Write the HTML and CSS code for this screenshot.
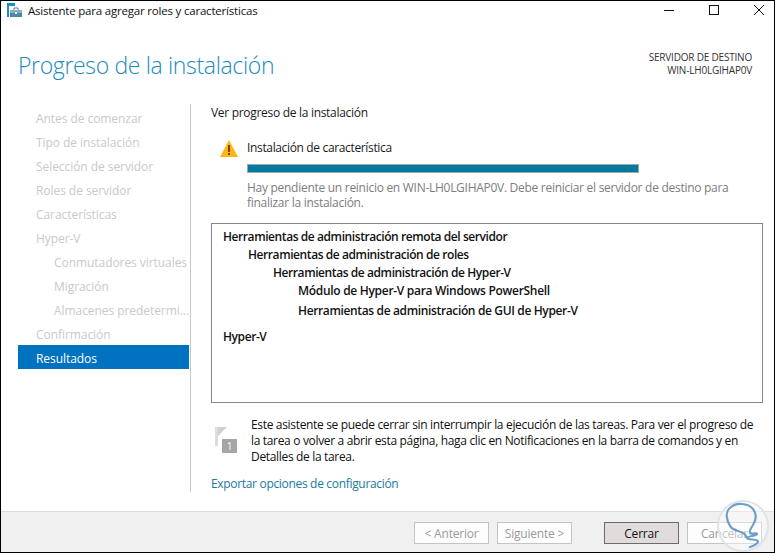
FILE: index.html
```html
<!DOCTYPE html>
<html lang="es">
<head>
<meta charset="utf-8">
<title>Asistente para agregar roles y características</title>
<link rel="stylesheet" href="styles.css">
</head>
<body>
<div class="window">
  <div class="titlebar">
    <svg class="app-icon" width="15" height="14" viewBox="0 0 15 14">
      <rect x="0" y="0" width="8" height="3" fill="#1a8fc4"/>
      <rect x="0" y="3" width="2" height="11" fill="#1a8fc4"/>
      <rect x="3" y="7" width="12" height="7" fill="#4f86ab"/>
      <path d="M3 7h12v3H3z" fill="#86afcb"/>
      <path d="M7 7V5h4v2" fill="none" stroke="#5a7f9a"/>
      <rect x="8" y="9" width="2" height="2" fill="#fff"/>
    </svg>
    <span class="title-text">Asistente para agregar roles y características</span>
    <div class="controls">
      <svg width="10" height="10" viewBox="0 0 10 10"><path d="M0 5.5h10" stroke="#111" fill="none"/></svg>
      <svg width="10" height="10" viewBox="0 0 10 10"><rect x=".5" y=".5" width="9" height="9" stroke="#111" fill="none"/></svg>
      <svg width="10" height="10" viewBox="0 0 10 10"><path d="M0 0l10 10M10 0L0 10" stroke="#111" fill="none"/></svg>
    </div>
  </div>
  <header class="head">
    <h1>Progreso de la instalación</h1>
    <div class="dest">SERVIDOR DE DESTINO<br>WIN-LH0LGIHAP0V</div>
  </header>
  <div class="content">
    <nav class="side">
      <div class="item">Antes de comenzar</div>
      <div class="item">Tipo de instalación</div>
      <div class="item">Selección de servidor</div>
      <div class="item">Roles de servidor</div>
      <div class="item">Características</div>
      <div class="item">Hyper-V</div>
      <div class="item sub">Conmutadores virtuales</div>
      <div class="item sub">Migración</div>
      <div class="item sub">Almacenes predetermi...</div>
      <div class="item">Confirmación</div>
      <div class="item active">Resultados</div>
    </nav>
    <main class="main">
      <div class="view">Ver progreso de la instalación</div>
      <div class="status">
        <svg class="warn" width="18" height="17" viewBox="0 0 18 17">
          <path d="M9 0L18 17H0z" fill="#fdb714"/>
          <rect x="8" y="5" width="2" height="7" fill="#8a3a14"/>
          <rect x="8" y="13" width="2" height="2" fill="#8a3a14"/>
        </svg>
        <div class="status-body">
          <div class="status-title">Instalación de característica</div>
          <div class="progress"><div class="bar"></div></div>
          <div class="status-note">Hay pendiente un reinicio en WIN-LH0LGIHAP0V. Debe reiniciar el servidor de destino para finalizar la instalación.</div>
        </div>
      </div>
      <div class="box">
        <div class="l0">Herramientas de administración remota del servidor</div>
        <div class="l1">Herramientas de administración de roles</div>
        <div class="l2">Herramientas de administración de Hyper-V</div>
        <div class="l3">Módulo de Hyper-V para Windows PowerShell</div>
        <div class="l3 gap2">Herramientas de administración de GUI de Hyper-V</div>
        <div class="l0 gap8">Hyper-V</div>
      </div>
      <div class="note">
        <svg class="flag" width="22" height="27" viewBox="0 0 22 27">
          <rect x="0" y="0" width="3" height="19" fill="#dcdcdc"/>
          <path d="M3 0h9L3 9z" fill="#cfcfcf"/>
          <rect x="7" y="12" width="15" height="14" fill="#a6a6a6"/>
        </svg>
        <span class="flag-num">1</span>
        <p>Este asistente se puede cerrar sin interrumpir la ejecución de las tareas. Para ver el progreso de la tarea o volver a abrir esta página, haga clic en Notificaciones en la barra de comandos y en Detalles de la tarea.</p>
      </div>
      <a class="export">Exportar opciones de configuración</a>
    </main>
  </div>
  <footer class="foot">
    <div class="btn off">&lt; Anterior</div>
    <div class="btn off">Siguiente &gt;</div>
    <div class="btn primary">Cerrar</div>
    <div class="btn off">Cancelar</div>
  </footer>
  <svg class="logo" width="54" height="54" viewBox="0 0 54 54">
    <circle cx="27" cy="26" r="25" fill="#fff" fill-opacity=".4" stroke="#dfe4e9" stroke-width="2"/>
    <path d="M14.7 27C10 20 9 12 14 8C20 2 32 3 37 9C41 14 40 20 37 25C35 28 33 31 34 33C37 35 41 32 41 34C41 36 31 36 31 38C31 40 42 39 42 41C42 44 37 46 34 47M14.7 27C18 31 24 31 27 33C29 34 30 35 30 37" fill="none" stroke="#6d9fcb" stroke-width="2.2" stroke-linecap="round" stroke-linejoin="round"/>
  </svg>
</div>
</body>
</html>
```
FILE: styles.css
```css
* { box-sizing: border-box; }
html, body { margin: 0; padding: 0; background: #fff; }
body { font-family: "Open Sans", "Noto Sans", sans-serif; font-size: 12px; color: #1a1a1a; }
.window {
  position: relative;
  width: 775px;
  height: 553px;
  border: 1px solid #000;
  display: flex;
  flex-direction: column;
  background: #fff;
  overflow: hidden;
}
.titlebar { height: 21px; display: flex; align-items: center; padding-left: 6px; flex: none; }
.app-icon { flex: none; margin-top: -3px; }
.title-text { margin-left: 6px; margin-top: -2px; font-size: 11.5px; letter-spacing: -0.2px; color: #111; }
.controls { margin-left: auto; display: flex; gap: 35px; padding-right: 10px; align-items: center; margin-top: -3px; }
.head { height: 82px; flex: none; display: flex; justify-content: space-between; padding: 27px 22px 0 17px; }
.head h1 { margin: 0; font-size: 23px; line-height: 32px; font-weight: 300; color: #1a8bbd; letter-spacing: -0.35px; }
.dest { font-size: 10px; line-height: 13px; text-align: right; padding-top: 2px; color: #333; letter-spacing: -0.2px; }
.content { flex: 1; display: flex; min-height: 0; padding-bottom: 19px; }
.side { width: 173px; margin-left: 17px; border-right: 1px solid #c8c8c8; padding-top: 1px; flex: none; }
.item { height: 24px; line-height: 28px; padding-left: 18px; color: #c9c9c9; white-space: nowrap; letter-spacing: -0.06px; width: 171px; overflow: hidden; }
.item.sub { padding-left: 36px; }
.item.active { background: #0072c0; color: #fff; }
.main { flex: 1; padding-left: 20px; padding-right: 11px; min-width: 0; display: flex; flex-direction: column; }
.view { line-height: 18px; letter-spacing: -0.3px; }
.status { display: flex; margin-top: 16px; padding-left: 9px; }
.warn { flex: none; margin-top: 2px; }
.status-body { margin-left: 9px; flex: 1; padding-right: 24px; }
.status-title { line-height: 16px; letter-spacing: -0.35px; margin-top: 2px; }
.progress { width: 392px; height: 9px; margin-top: 8px; background: #007b9e; border: 1px solid #a5a5a5; }
.bar { width: 100%; height: 100%; }
.status-note { margin-top: 7px; line-height: 15px; color: #7d7d7d; letter-spacing: -0.28px; }
.box { margin-top: 13px; height: 181px; border: 1px solid #85858b; padding: 4px 11px; font-weight: 600; color: #111; letter-spacing: -0.42px; }
.box div { line-height: 18px; }
.box .l3 { letter-spacing: -0.3px; }
.box .gap2 { margin-top: 2px; letter-spacing: -0.36px; }
.l1 { padding-left: 25px; }
.l2 { padding-left: 50px; }
.l3 { padding-left: 75px; }
.gap8 { margin-top: 8px; }
.note { position: relative; display: flex; margin-top: 14px; padding-left: 4px; }
.flag { flex: none; margin-top: 10px; }
.flag-num { position: absolute; left: 11px; top: 22px; font-size: 10px; line-height: 14px; width: 15px; text-align: center; color: #fff; }
.note p { margin: 0 0 0 14px; line-height: 16px; letter-spacing: -0.33px; color: #111; }
.export { margin-top: 11px; line-height: 16px; color: #1b7a9d; letter-spacing: -0.32px; }
.foot { flex: none; height: 41px; background: #f0f0f0; border-top: 1px solid #dcdcdc; display: flex; align-items: flex-start; padding: 10px 0 0 413px; }
.btn { width: 75px; height: 22px; line-height: 21px; text-align: center; border: 1px solid #c4c4c4; background: #fdfdfd; letter-spacing: -0.2px; }
.btn + .btn { margin-left: 8px; }
.btn.off { color: #9a9a9a; }
.btn.primary { margin-left: 32px; background: #e1dcdc; border-color: #6f6a6a; color: #111; }
.logo { position: absolute; right: 4px; bottom: -2px; }
```
